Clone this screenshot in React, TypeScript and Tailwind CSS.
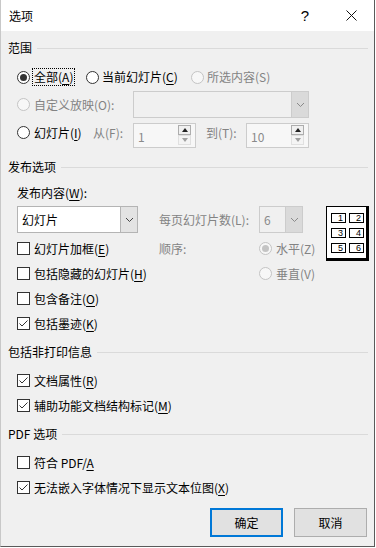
import type { ReactNode } from "react";

const FONT = "font-['Noto_Sans_CJK_SC','Microsoft_YaHei',sans-serif]";

function Radio({ checked = false, disabled = false }: { checked?: boolean; disabled?: boolean }) {
  return (
    <span
      className={`flex h-[13px] w-[13px] shrink-0 items-center justify-center rounded-full border ${
        disabled ? "border-[#c4c4c4] bg-[#f7f7f7]" : "border-[#333333] bg-white"
      }`}
    >
      {checked && (
        <span className={`h-[7px] w-[7px] rounded-full ${disabled ? "bg-[#c4c4c4]" : "bg-[#333333]"}`} />
      )}
    </span>
  );
}

function Check({ checked = false }: { checked?: boolean }) {
  return (
    <span className="flex h-[13px] w-[13px] shrink-0 items-center justify-center border border-[#333333] bg-white">
      {checked && (
        <svg width="11" height="11" viewBox="0 0 11 11">
          <path d="M1.5 5.5 L4 8 L9.5 2.5" fill="none" stroke="#333333" strokeWidth="1" />
        </svg>
      )}
    </span>
  );
}

function Key({ k }: { k: string }) {
  return (
    <>
      (<u className="underline-offset-2">{k}</u>)
    </>
  );
}

function Header({ title, className = "" }: { title: string; className?: string }) {
  return (
    <div className={`flex h-[18px] items-center pl-[7px] pr-[6px] ${className}`}>
      <span className="leading-none">{title}</span>
      <span className="ml-[5px] h-px flex-1 bg-[#dadada]" />
    </div>
  );
}

function CheckRow({ label, checked, className = "" }: { label: ReactNode; checked?: boolean; className?: string }) {
  return (
    <div className={`flex h-[25px] items-center gap-[4px] pl-[16px] ${className}`}>
      <Check checked={checked} />
      <span className="leading-none whitespace-nowrap">{label}</span>
    </div>
  );
}

function Chevron({ color }: { color: string }) {
  return (
    <svg width="9" height="6" viewBox="0 0 9 6">
      <path d="M1 1 L4.5 4.5 L8 1" fill="none" stroke={color} strokeWidth="1" />
    </svg>
  );
}

function Combo({ value, disabled = false, className = "" }: { value?: string; disabled?: boolean; className?: string }) {
  return (
    <div
      className={`flex border ${disabled ? "border-[#cccccc] bg-[#f0f0f0]" : "border-[#b4b4b4] bg-white"} ${className}`}
    >
      <span className={`flex flex-1 items-center pl-[4px] leading-none ${disabled ? "text-[#8a8a8a]" : "text-black"}`}>
        {value}
      </span>
      <span
        className={`flex w-[17px] items-center justify-center border-l ${
          disabled ? "border-[#cccccc] bg-[#dadada]" : "border-[#b4b4b4] bg-[#e3e3e3]"
        }`}
      >
        <Chevron color={disabled ? "#8a8a8a" : "#444444"} />
      </span>
    </div>
  );
}

function Spin({ value, className = "" }: { value: string; className?: string }) {
  return (
    <div className={`flex border border-[#cccccc] bg-[#f7f7f7] ${className}`}>
      <span className="flex flex-1 items-center pl-[4px] pt-[2px] leading-none text-[#8a8a8a]">{value}</span>
      <div className="flex w-[17px] flex-col py-[1px] pr-[4px]">
        <span className="flex h-[10px] items-center justify-center border border-[#adadad] bg-[#f0f0f0]">
          <svg width="6" height="4" viewBox="0 0 6 4">
            <path d="M0 4 L3 0 L6 4 Z" fill="#222222" />
          </svg>
        </span>
        <span className="flex h-[10px] items-center justify-center border border-[#e0e0e0] bg-[#f4f4f4]">
          <svg width="6" height="4" viewBox="0 0 6 4">
            <path d="M0 0 L6 0 L3 4 Z" fill="#a0a0a0" />
          </svg>
        </span>
      </div>
    </div>
  );
}

function LayoutIcon() {
  const nums = ["1", "2", "3", "4", "5", "6"];
  return (
    <div className="h-[55px] w-[43px] border border-black border-r-[3px] border-b-[3px] bg-white pl-[4px] pt-[6px]">
      <div className="grid grid-cols-[15px_15px] gap-x-[3px] gap-y-[5px]">
        {nums.map((n) => (
          <span
            key={n}
            className="flex h-[10px] items-center justify-end overflow-visible border border-black pr-[2px] text-[9px] leading-none font-['Liberation_Sans',sans-serif]"
          >
            {n}
          </span>
        ))}
      </div>
    </div>
  );
}

export default function App() {
  return (
    <div className={`h-[548px] w-[376px] bg-white text-[12px] text-black ${FONT}`}>
      <div className="flex h-[547px] w-[375px] flex-col border-r border-b border-l border-r-[#5a5a5a] border-b-[#5a5a5a] border-l-[#c8c8c8]">
        {/* title bar */}
        <div className="flex h-[31px] shrink-0 items-center bg-white">
          <span className="pl-[8px] leading-none">选项</span>
          <span className="ml-auto flex h-full w-[46px] items-center justify-center text-[15px] leading-none font-['Liberation_Sans',sans-serif]">
            ?
          </span>
          <span className="flex h-full w-[46px] items-center justify-center">
            <svg width="11" height="11" viewBox="0 0 11 11">
              <path d="M0.5 0.5 L10.5 10.5 M10.5 0.5 L0.5 10.5" stroke="#111111" strokeWidth="1" />
            </svg>
          </span>
        </div>

        <div className="flex flex-1 flex-col bg-[#f0f0f0]">
          <Header title="范围" className="mt-[8px]" />

          <div className="mt-[8px] flex h-[24px] items-center pl-[16px]">
            <div className="flex w-[69px] items-center">
              <Radio checked />
              <span className="ml-[2px] flex h-[18px] items-center border border-dotted border-black px-[1px] leading-none">
                全部<Key k="A" />
              </span>
            </div>
            <div className="flex w-[105px] items-center gap-[3px]">
              <Radio />
              <span className="leading-none">
                当前幻灯片<Key k="C" />
              </span>
            </div>
            <div className="flex items-center gap-[3px] text-[#838383]">
              <Radio disabled />
              <span className="leading-none">所选内容(S)</span>
            </div>
          </div>

          <div className="mt-[2px] flex h-[27px] items-center pl-[16px]">
            <div className="flex w-[116px] items-center gap-[4px] text-[#838383]">
              <Radio disabled />
              <span className="leading-none">自定义放映(O):</span>
            </div>
            <Combo disabled className="h-full w-[176px]" />
          </div>

          <div className="mt-[5px] flex h-[25px] items-start pl-[16px]">
            <div className="flex h-[19px] w-[76px] items-center gap-[4px]">
              <Radio />
              <span className="leading-none">
                幻灯片<Key k="I" />
              </span>
            </div>
            <span className="flex h-[19px] w-[40px] items-center leading-none text-[#838383]">从(F):</span>
            <Spin value="1" className="h-full w-[63px]" />
            <span className="ml-[10px] flex h-[19px] w-[40px] items-center leading-none text-[#838383]">到(T):</span>
            <Spin value="10" className="h-full w-[63px]" />
          </div>

          <Header title="发布选项" className="mt-[10px]" />

          <div className="mt-[8px] flex h-[18px] items-center pl-[16px]">
            <span className="leading-none">
              发布内容<Key k="W" />:
            </span>
          </div>

          <div className="mt-[4px] grid grid-cols-[142px_100px_67px_43px] grid-rows-[30px_25px_25px_25px_25px] pl-[16px]">
            <Combo value="幻灯片" className="h-[27px] w-[121px] self-start" />
            <span className="flex h-[27px] items-center leading-none text-[#838383]">每页幻灯片数(L):</span>
            <Combo value="6" disabled className="h-[27px] w-[44px] self-start" />
            <div className="row-span-2">
              <LayoutIcon />
            </div>

            <div className="flex items-center gap-[4px]">
              <Check />
              <span className="leading-none">
                幻灯片加框<Key k="E" />
              </span>
            </div>
            <span className="flex items-center leading-none text-[#838383]">顺序:</span>
            <div className="flex items-center gap-[4px] whitespace-nowrap text-[#838383]">
              <Radio checked disabled />
              <span className="leading-none">水平(Z)</span>
            </div>

            <div className="col-span-2 flex items-center gap-[4px]">
              <Check />
              <span className="leading-none">
                包括隐藏的幻灯片<Key k="H" />
              </span>
            </div>
            <div className="col-span-2 flex items-center gap-[4px] text-[#838383]">
              <Radio disabled />
              <span className="leading-none">垂直(V)</span>
            </div>

            <div className="col-span-4 flex items-center gap-[4px]">
              <Check />
              <span className="leading-none">
                包含备注<Key k="O" />
              </span>
            </div>
            <div className="col-span-4 flex items-center gap-[4px]">
              <Check checked />
              <span className="leading-none">
                包括墨迹<Key k="K" />
              </span>
            </div>
          </div>

          <Header title="包括非打印信息" className="mt-[7px]" />
          <CheckRow
            checked
            className="mt-[7px]"
            label={
              <>
                文档属性<Key k="R" />
              </>
            }
          />
          <CheckRow
            checked
            label={
              <>
                辅助功能文档结构标记<Key k="M" />
              </>
            }
          />

          <Header title="PDF 选项" className="mt-[7px]" />
          <CheckRow
            className="mt-[7px]"
            label={
              <>
                符合 PDF/<u className="underline-offset-2">A</u>
              </>
            }
          />
          <CheckRow
            checked
            label={
              <>
                无法嵌入字体情况下显示文本位图<Key k="X" />
              </>
            }
          />

          <div className="mt-[8px] flex justify-end gap-[11px] pr-[7px]">
            <button className="flex h-[29px] w-[73px] items-center justify-center border-2 border-[#0078d7] bg-[#e1e1e1] leading-none">
              确定
            </button>
            <button className="flex h-[29px] w-[73px] items-center justify-center border border-[#adadad] bg-[#e1e1e1] leading-none">
              取消
            </button>
          </div>
        </div>
      </div>
    </div>
  );
}
